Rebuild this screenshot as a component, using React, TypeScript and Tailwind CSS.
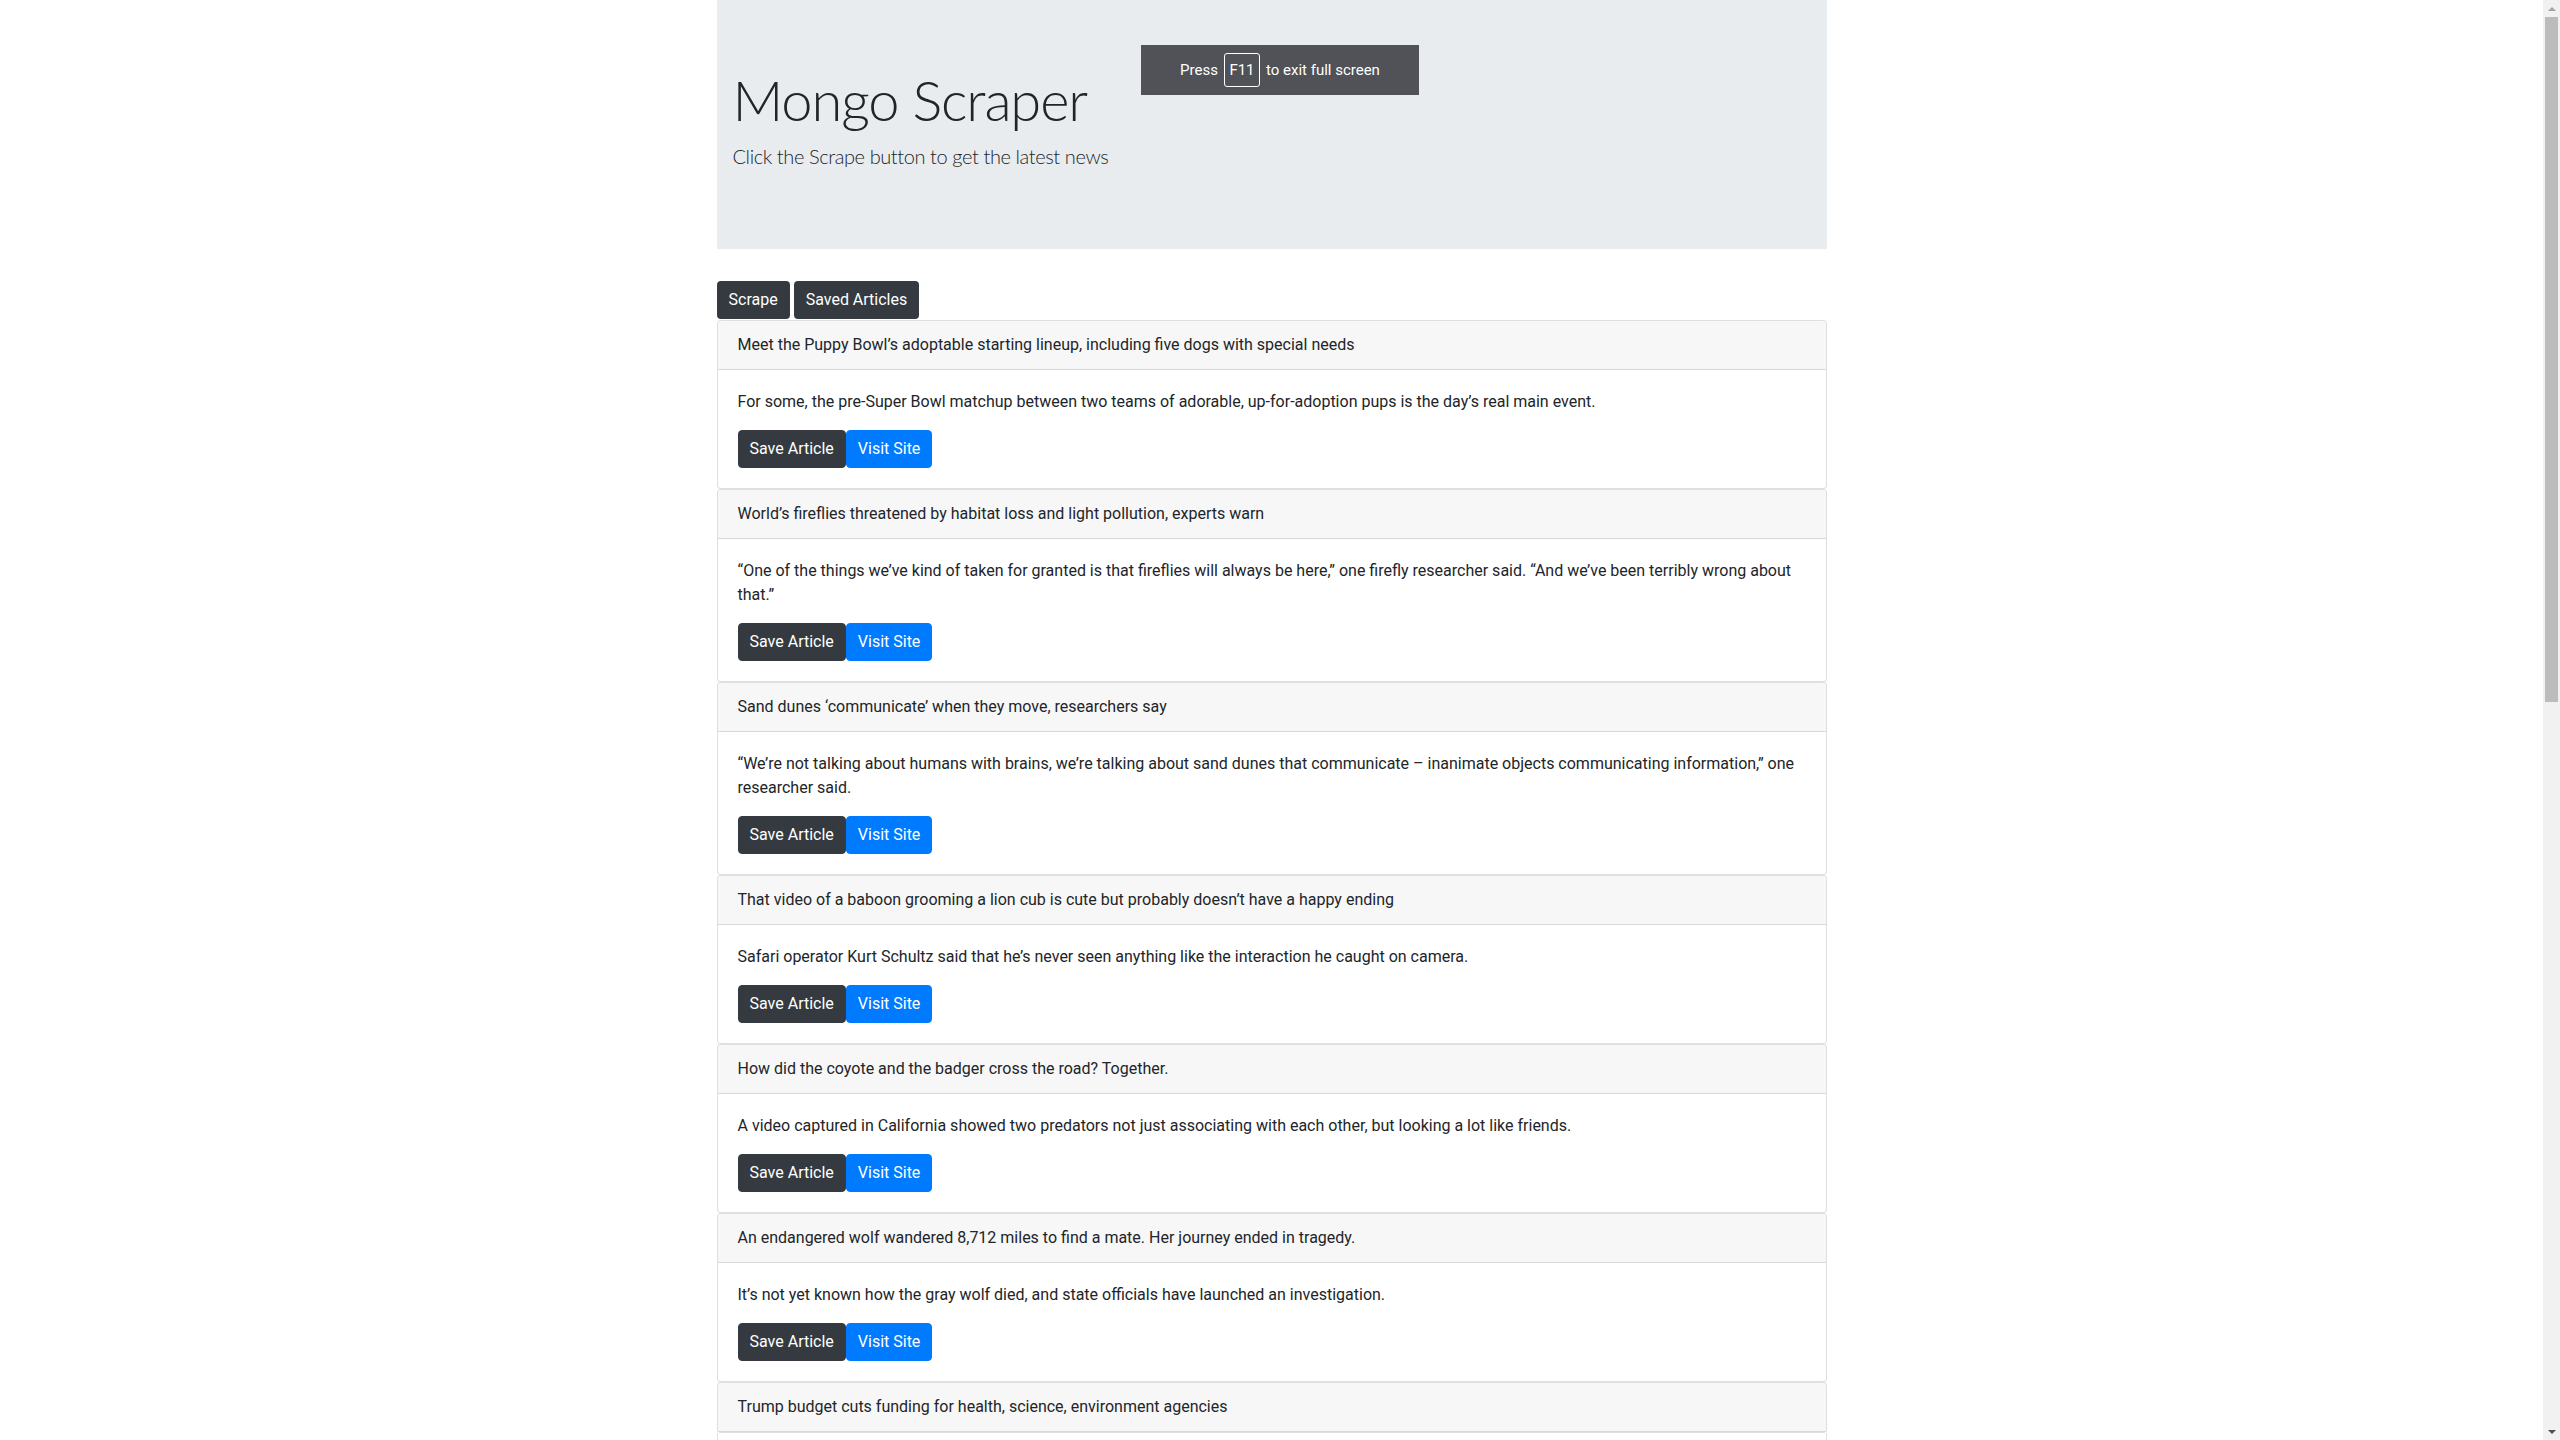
import React from 'react';

interface Article {
  headline: string;
  summary: string;
}

const articles: Article[] = [
  {
    headline: 'Meet the Puppy Bowl’s adoptable starting lineup, including five dogs with special needs',
    summary: 'For some, the pre-Super Bowl matchup between two teams of adorable, up-for-adoption pups is the day’s real main event.',
  },
  {
    headline: 'World’s fireflies threatened by habitat loss and light pollution, experts warn',
    summary: '“One of the things we’ve kind of taken for granted is that fireflies will always be here,” one firefly researcher said. “And we’ve been terribly wrong about that.”',
  },
  {
    headline: 'Sand dunes ‘communicate’ when they move, researchers say',
    summary: '“We’re not talking about humans with brains, we’re talking about sand dunes that communicate – inanimate objects communicating information,” one researcher said.',
  },
  {
    headline: 'That video of a baboon grooming a lion cub is cute but probably doesn’t have a happy ending',
    summary: 'Safari operator Kurt Schultz said that he’s never seen anything like the interaction he caught on camera.',
  },
  {
    headline: 'How did the coyote and the badger cross the road? Together.',
    summary: 'A video captured in California showed two predators not just associating with each other, but looking a lot like friends.',
  },
  {
    headline: 'An endangered wolf wandered 8,712 miles to find a mate. Her journey ended in tragedy.',
    summary: 'It’s not yet known how the gray wolf died, and state officials have launched an investigation.',
  },
  {
    headline: 'Trump budget cuts funding for health, science, environment agencies',
    summary: '',
  },
];

const ArticleCard: React.FC<{ article: Article }> = ({ article }) => (
  <div className="border border-[rgba(0,0,0,0.125)] rounded-[4px] bg-white">
    <div className="bg-[#f7f7f7] border-b border-[rgba(0,0,0,0.125)] px-5 py-3 leading-6 rounded-t-[4px]">
      {article.headline}
    </div>
    {article.summary && (
      <div className="p-5">
        <p className="leading-6 mb-4">{article.summary}</p>
        <div className="flex">
          <button className="h-[38px] px-[11px] bg-[#343a40] text-white rounded-[4px] border border-[#343a40]">Save Article</button>
          <button className="h-[38px] px-[11px] bg-[#007bff] text-white rounded-[4px] border border-[#007bff]">Visit Site</button>
        </div>
      </div>
    )}
  </div>
);

export default function App() {
  return (
    <div className="h-[1440px] overflow-hidden flex bg-white text-[#212529] text-[16px] relative" style={{ fontFamily: 'Roboto, "Liberation Sans", sans-serif' }}>
      <div className="flex-1 min-w-0 overflow-hidden">
        <div className="w-[1110px] mx-auto">
          <div className="h-[249px] bg-[#e9ecef] pt-[66px] px-4">
            <h1 className="text-[56px] font-light leading-[1.2] mb-2 tracking-[-0.02em]" style={{ fontFamily: 'Lato, sans-serif' }}>
              Mongo Scraper
            </h1>
            <p className="text-[20px] font-light leading-[30px] tracking-[-0.02em]" style={{ fontFamily: 'Lato, sans-serif' }}>
              Click the Scrape button to get the latest news
            </p>
          </div>

          <div className="flex gap-1 mt-8">
            <button className="h-[38px] px-3 bg-[#343a40] text-white rounded-[4px]">Scrape</button>
            <button className="h-[38px] px-3 bg-[#343a40] text-white rounded-[4px]">Saved Articles</button>
          </div>

          <div className="mt-px flex flex-col">
            {articles.map((a) => (
              <ArticleCard key={a.headline} article={a} />
            ))}
            <div className="h-[120px] border-x border-[rgba(0,0,0,0.125)]" />
          </div>
        </div>
      </div>

      {/* fake scrollbar */}
      <div className="w-[17px] h-full bg-[#f1f1f1] flex flex-col items-center shrink-0">
        <div className="h-[17px] flex items-center justify-center">
          <div className="w-0 h-0 border-l-[4px] border-r-[4px] border-b-[4px] border-l-transparent border-r-transparent border-b-[#a3a3a3]" />
        </div>
        <div className="w-[13px] h-[685px] bg-[#bcbcbc]" />
        <div className="flex-1" />
        <div className="h-[17px] flex items-center justify-center">
          <div className="w-0 h-0 border-l-[4px] border-r-[4px] border-t-[4px] border-l-transparent border-r-transparent border-t-[#505050]" />
        </div>
      </div>

      {/* browser full screen notice */}
      <div className="absolute top-[45px] left-[1141px] w-[278px] h-[50px] bg-[#505258] text-white text-[15px] flex items-center justify-center gap-[6px]">
        <span>Press</span>
        <span className="h-[34px] w-[36px] border border-white rounded-[3px] flex items-center justify-center">F11</span>
        <span>to exit full screen</span>
      </div>
    </div>
  );
}
